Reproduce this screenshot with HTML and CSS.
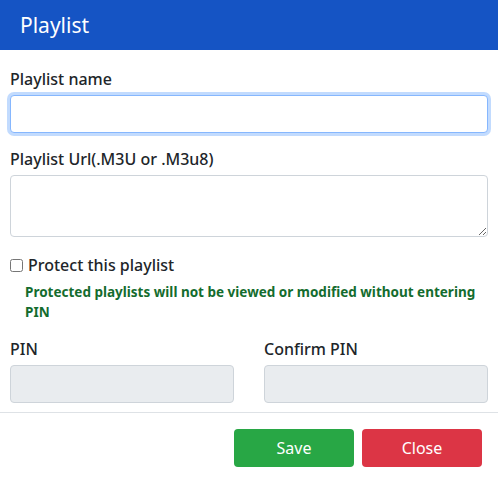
FILE: index.html
```html
<!DOCTYPE html>
<html>
<head>
  <meta charset="UTF-8">
  <meta name="viewport" content="width=device-width, initial-scale=1.0">
  <title>Playlist</title>
  <link rel="stylesheet" href="styles.css">
</head>
<body>
  <div class="modal">
    <div class="modal-header">
      <h1>Playlist</h1>
    </div>
    <div class="modal-body">
      <label class="field-label" for="name">Playlist name</label>
      <input type="text" id="name" class="field focused">

      <label class="field-label second" for="url">Playlist Url(.M3U or .M3u8)</label>
      <textarea id="url" class="field area"></textarea>

      <label class="check-row">
        <input type="checkbox" id="protect">
        <span>Protect this playlist</span>
      </label>
      <p class="hint">Protected playlists will not be viewed or modified without entering PIN</p>

      <div class="pin-row">
        <div class="pin-col">
          <label class="field-label" for="pin">PIN</label>
          <input type="password" id="pin" class="field" disabled>
        </div>
        <div class="pin-col">
          <label class="field-label" for="pin2">Confirm PIN</label>
          <input type="password" id="pin2" class="field" disabled>
        </div>
      </div>
    </div>
    <div class="modal-footer">
      <button class="btn btn-save">Save</button>
      <button class="btn btn-close">Close</button>
    </div>
  </div>
</body>
</html>
```

FILE: styles.css
```css
body {
  margin: 0;
  font-family: "Noto Sans", "Open Sans", sans-serif;
  background: #fff;
  color: #212529;
}
.modal {
  width: 498px;
  height: 483px;
  background: #fff;
  overflow: hidden;
}
.modal-header {
  background: #1554c4;
  height: 50px;
  display: flex;
  align-items: center;
  padding: 0 20px;
}
.modal-header h1 {
  margin: 0;
  color: #fff;
  font-size: 21px;
  font-weight: 400;
}
.modal-body {
  padding: 17px 10px 0 10px;
  height: 345px;
}
.field-label {
  display: block;
  font-size: 16px;
  font-weight: 500;
  line-height: 24px;
  margin-bottom: 4px;
}
.field-label.second {
  margin-top: 14px;
}
.field {
  display: block;
  width: 100%;
  box-sizing: border-box;
  height: 38px;
  border: 1px solid #ced4da;
  border-radius: 4px;
  background: #fff;
  font: inherit;
  padding: 6px 12px;
}
.field.focused {
  border-color: #86b7fe;
  box-shadow: 0 0 0 3px rgba(13, 110, 253, 0.25);
  outline: none;
}
.field.area {
  height: 62px;
  resize: vertical;
}
.field:disabled {
  background: #e9ecef;
}
.check-row {
  display: flex;
  align-items: center;
  gap: 5px;
  margin-top: 16px;
  font-size: 16px;
  font-weight: 500;
  line-height: 24px;
}
.check-row input {
  margin: 0;
  width: 13px;
  height: 13px;
}
.hint {
  margin: 5px 0 0 15px;
  max-width: 455px;
  color: #146c2e;
  font-size: 13.5px;
  font-weight: 700;
  line-height: 20px;
}
.pin-row {
  display: flex;
  gap: 30px;
  margin-top: 15px;
}
.pin-col {
  flex: 1;
}
.modal-footer {
  border-top: 1px solid #dee2e6;
  display: flex;
  justify-content: flex-end;
  gap: 8px;
  padding: 16px 16px 0 0;
}
.btn {
  width: 120px;
  height: 38px;
  border: none;
  border-radius: 4px;
  color: #fff;
  font: inherit;
  font-size: 16px;
}
.btn-save {
  background: #28a745;
}
.btn-close {
  background: #dc3545;
}
```
